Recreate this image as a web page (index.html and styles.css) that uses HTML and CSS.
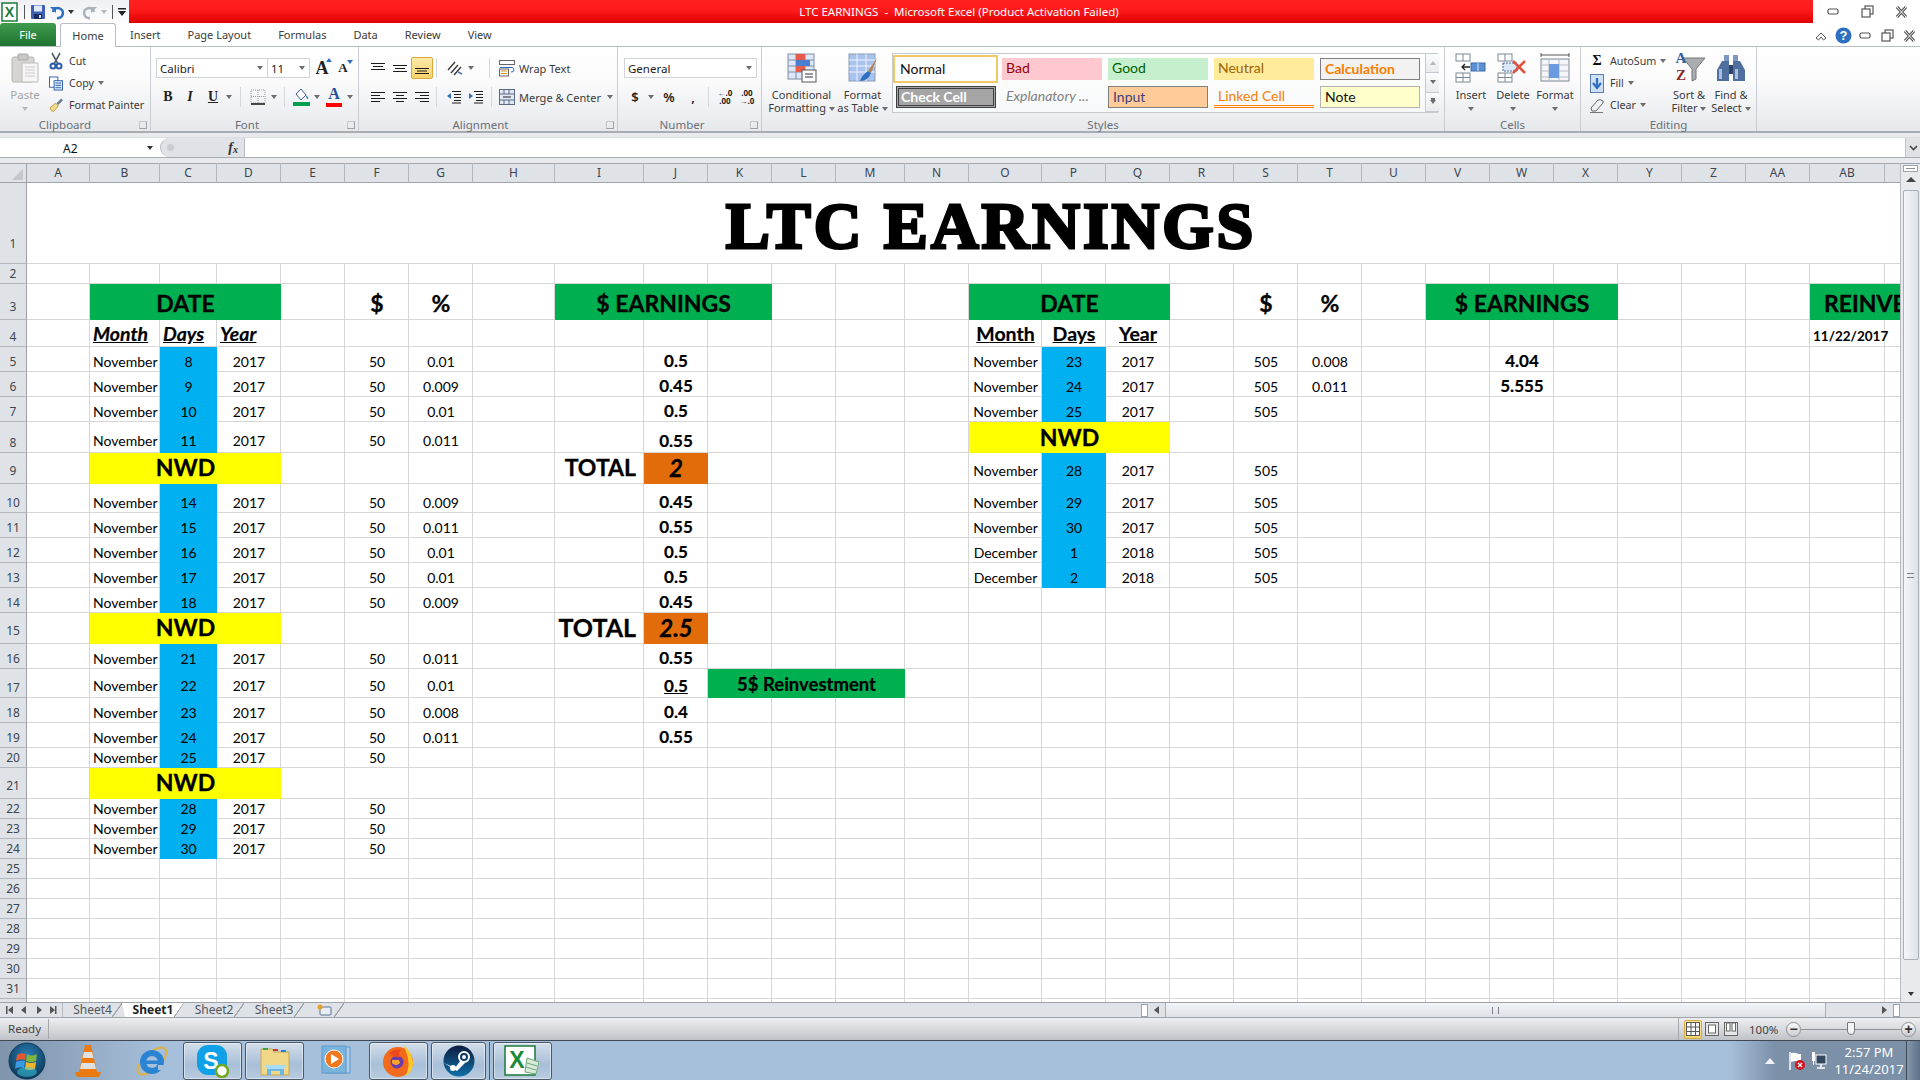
FILE: index.html
```html
<!DOCTYPE html>
<html lang="en">
<head>
<meta charset="utf-8">
<title>LTC EARNINGS - Microsoft Excel</title>
<link rel="stylesheet" href="styles.css">
</head>
<body>
<div class="app">

<header class="titlebar">
  <div class="qat">
    <svg class="qi" width="18" height="20" viewBox="0 0 18 20"><rect x="1" y="1" width="15" height="18" fill="#fff" stroke="#1c7a3a" stroke-width="1.5"/><text x="8.5" y="15" class="xl">X</text></svg>
    <span class="qsep"></span>
    <svg class="qi" width="16" height="16" viewBox="0 0 16 16"><rect x="1" y="1" width="14" height="14" rx="1" fill="#3f5fb5"/><rect x="4" y="1.500" width="8" height="6" fill="#dfe9f7"/><rect x="4" y="10" width="8" height="5" fill="#1d2c5e"/><rect x="9" y="11" width="2" height="3" fill="#cdd"/></svg>
    <svg class="qi" width="14" height="16" viewBox="0 0 14 16"><path d="M3 8 A5 5 0 1 1 7 14" fill="none" stroke="#2f6fc0" stroke-width="2.600"/><path d="M0 3 L6 3 L6 9 Z" fill="#2f6fc0"/></svg>
    <span class="tri dark"></span>
    <svg class="qi q2" width="14" height="16" viewBox="0 0 14 16"><path d="M11 8 A5 5 0 1 0 7 14" fill="none" stroke="#aab2ba" stroke-width="2.600"/><path d="M14 3 L8 3 L8 9 Z" fill="#aab2ba"/></svg>
    <span class="tri pale"></span>
    <span class="qsep"></span>
    <svg class="qi" width="8" height="10" viewBox="0 0 8 10"><rect x="0" y="1" width="8" height="1.500" fill="#222"/><path d="M0 4 H8 L4 9 Z" fill="#222"/></svg>
  </div>
  <div class="redbar">LTC EARNINGS &nbsp;-&nbsp; Microsoft Excel (Product Activation Failed)</div>
  <div class="winctl">
    <svg width="12" height="8" viewBox="0 0 12 8"><rect x="1" y="1" width="10" height="5" rx="1.500" fill="#fff" stroke="#555" stroke-width="1.200"/></svg>
    <svg width="13" height="13" viewBox="0 0 13 13"><rect x="4" y="1" width="8" height="8" fill="#fff" stroke="#555" stroke-width="1.200"/><rect x="1" y="4" width="8" height="8" fill="#fff" stroke="#555" stroke-width="1.200"/></svg>
    <svg width="13" height="12" viewBox="0 0 13 12"><path d="M2 1 L11 11 M11 1 L2 11" stroke="#555" stroke-width="3"/><path d="M2 1 L11 11 M11 1 L2 11" stroke="#fff" stroke-width="1"/></svg>
  </div>
</header>

<nav class="tabs">
  <div class="file">File</div>
  <div class="home">Home</div>
  <div class="tablist"><span>Insert</span><span>Page Layout</span><span>Formulas</span><span>Data</span><span>Review</span><span>View</span></div>
  <div class="docctl">
    <svg width="12" height="10" viewBox="0 0 12 10"><path d="M1 7 L6 2 L11 7 L8.500 9 L6 6 L3.500 9 Z" fill="#fff" stroke="#555"/></svg>
    <svg width="17" height="17" viewBox="0 0 17 17"><circle cx="8.500" cy="8.500" r="8" fill="#2f6fc0"/><text x="8.500" y="13" class="help">?</text></svg>
    <svg width="12" height="8" viewBox="0 0 12 8"><rect x="1" y="1" width="10" height="5" rx="1.500" fill="#fff" stroke="#555" stroke-width="1.200"/></svg>
    <svg width="13" height="13" viewBox="0 0 13 13"><rect x="4" y="1" width="8" height="8" fill="#fff" stroke="#555" stroke-width="1.200"/><rect x="1" y="4" width="8" height="8" fill="#fff" stroke="#555" stroke-width="1.200"/></svg>
    <svg width="13" height="12" viewBox="0 0 13 12"><path d="M2 1 L11 11 M11 1 L2 11" stroke="#555" stroke-width="3"/><path d="M2 1 L11 11 M11 1 L2 11" stroke="#fff" stroke-width="1"/></svg>
  </div>
</nav>

<section class="ribbon">

  <div class="group g-clip">
    <div class="gbody">
      <div class="paste">
        <svg width="28" height="30" viewBox="0 0 28 30"><rect x="1" y="4" width="22" height="25" rx="2" fill="#d7d5d2" stroke="#b5b3b0"/><rect x="7" y="1" width="10" height="6" rx="1" fill="#c9c7c4" stroke="#aaa"/><path d="M11 10 H27 V29 H11 Z" fill="#f6f6f6" stroke="#bbb"/><path d="M14 14 H24 M14 17 H24 M14 20 H24 M14 23 H24" stroke="#ccc"/></svg>
        <span class="plabel">Paste</span><span class="tri pale"></span>
      </div>
      <div class="smallcol">
        <div class="si"><svg width="14" height="18" viewBox="0 0 14 18"><path d="M3 1 L9 12 M11 1 L5 12" stroke="#57606c" stroke-width="1.600"/><circle cx="4" cy="14" r="2.500" fill="none" stroke="#2a5fa8" stroke-width="2"/><circle cx="10" cy="14" r="2.500" fill="none" stroke="#2a5fa8" stroke-width="2"/></svg>Cut</div>
        <div class="si"><svg width="15" height="15" viewBox="0 0 15 15"><rect x="0.500" y="0.500" width="9" height="11" fill="#fff" stroke="#2a5fa8"/><rect x="5.500" y="4.500" width="9" height="10" fill="#dce8f6" stroke="#2a5fa8"/><path d="M7 7 H13 M7 9.500 H13 M7 12 H13" stroke="#2a5fa8"/></svg>Copy <span class="tri"></span></div>
        <div class="si"><svg width="15" height="16" viewBox="0 0 15 16"><path d="M1 11 L7 6 L10 9 L5 15 Q2 15 1 11 Z" fill="#efd98a" stroke="#b08d30" stroke-width=".8"/><path d="M8 6 L13 1 L15 3 L10 8 Z" fill="#6c7a8e"/></svg>Format Painter</div>
      </div>
    </div>
    <div class="glabel lb-clip">Clipboard<i class="launch"></i></div>
  </div>

  <div class="group g-font">
    <div class="gbody stack">
      <div class="line">
        <div class="combo c-name">Calibri<span class="tri"></span></div>
        <div class="combo c-size">11<span class="tri"></span></div>
        <span class="growA big">A<i class="up"></i></span>
        <span class="growA small">A<i class="down"></i></span>
      </div>
      <div class="line lf">
        <span class="ic fb">B</span><span class="ic fi">I</span><span class="ic fu">U</span><span class="dd"><span class="tri"></span></span>
        <span class="vsep wider"></span>
        <span class="ic"><svg width="16" height="16" viewBox="0 0 16 16"><path d="M1 1 H15 V14 H1 Z M8 1 V14 M1 7.500 H15" fill="none" stroke="#999" stroke-dasharray="1 1"/><path d="M1 15 H15" stroke="#111" stroke-width="1.500"/></svg></span><span class="dd"><span class="tri"></span></span>
        <span class="vsep"></span>
        <span class="ic"><svg width="17" height="18" viewBox="0 0 17 18"><path d="M3 6 L8 1 L13 7 L8 12 Z" fill="#fff" stroke="#3a5f94"/><path d="M13 7 Q16 10 15 11 Q13 11 13 7 Z" fill="#2f6fc0"/><rect x="0" y="14" width="17" height="4" fill="#00a050"/></svg></span><span class="dd"><span class="tri"></span></span>
        <span class="ic fcolor">A<i></i></span><span class="dd"><span class="tri"></span></span>
      </div>
    </div>
    <div class="glabel lb-mid">Font<i class="launch"></i></div>
  </div>

  <div class="group g-align">
    <div class="gbody stack">
      <div class="line">
        <span class="ic"><svg class="al" viewBox="0 0 14 14"><path d="M0 2.500 H14 M2 5.500 H12 M0 8.500 H14" /></svg></span>
        <span class="ic"><svg class="al" viewBox="0 0 14 14"><path d="M0 4.500 H14 M2 7.500 H12 M0 10.500 H14" /></svg></span>
        <span class="ic on"><svg class="al" viewBox="0 0 14 14"><path d="M0 7.500 H14 M2 10 H12 M0 12.500 H14" /></svg></span>
        <span class="vsep s1"></span>
        <span class="ic"><svg width="18" height="16" viewBox="0 0 18 16"><path d="M2 10 L9 2 M5 13 L12 5 M8 15 L15 7" stroke="#333" stroke-width="1.300"/><path d="M12 12 L16 14" stroke="#4a77b5" stroke-width="1.500"/></svg></span><span class="dd"><span class="tri"></span></span>
        <span class="vsep s2"></span>
        <span class="wide"><svg width="16" height="17" viewBox="0 0 16 17"><rect x=".5" y=".5" width="15" height="4" fill="#fff" stroke="#666"/><path d="M1 7.500 H13 Q15 7.500 15 10 Q15 12 12 12" fill="none" stroke="#2f6fc0"/><rect x=".5" y="9" width="9" height="7" fill="#fff" stroke="#666"/><path d="M2 11 H8 M2 13.500 H8" stroke="#d98b20"/></svg>Wrap Text</span>
      </div>
      <div class="line">
        <span class="ic"><svg class="al" viewBox="0 0 14 14"><path d="M0 2.500 H14 M0 5.500 H9 M0 8.500 H14 M0 11.500 H9"/></svg></span>
        <span class="ic"><svg class="al" viewBox="0 0 14 14"><path d="M0 2.500 H14 M3 5.500 H11 M0 8.500 H14 M3 11.500 H11"/></svg></span>
        <span class="ic"><svg class="al" viewBox="0 0 14 14"><path d="M0 2.500 H14 M5 5.500 H14 M0 8.500 H14 M5 11.500 H14"/></svg></span>
        <span class="vsep s1b"></span>
        <span class="ic"><svg class="al" viewBox="0 0 14 14"><path d="M5 1.500 H14 M7 4.500 H14 M7 7.500 H14 M7 10.500 H14 M5 13 H14"/><path d="M0 6 L4 3 V9 Z" fill="#2f6fc0" stroke="none"/></svg></span>
        <span class="ic"><svg class="al" viewBox="0 0 14 14"><path d="M5 1.500 H14 M7 4.500 H14 M7 7.500 H14 M7 10.500 H14 M5 13 H14"/><path d="M4 6 L0 3 V9 Z" fill="#2f6fc0" stroke="none"/></svg></span>
        <span class="vsep s2b"></span>
        <span class="wide"><svg width="16" height="16" viewBox="0 0 16 16"><rect x=".5" y=".5" width="15" height="15" fill="#dfe8f4" stroke="#5a6a80"/><path d="M.5 5 H15.500 M.5 11 H15.500 M5 .5 V5 M10 .5 V5 M5 11 V15.500 M10 11 V15.500" stroke="#5a6a80"/><path d="M4 8 H12" stroke="#222"/></svg>Merge &amp; Center <span class="tri"></span></span>
      </div>
    </div>
    <div class="glabel lb-mid">Alignment<i class="launch"></i></div>
  </div>

  <div class="group g-num">
    <div class="gbody stack">
      <div class="line"><div class="combo c-gen">General<span class="tri"></span></div></div>
      <div class="line">
        <span class="ic sym">$</span><span class="dd"><span class="tri"></span></span>
        <span class="ic sym n1">%</span>
        <span class="ic sym n2">,</span>
        <span class="vsep s3"></span>
        <span class="ic dec">←.0<br>.00</span>
        <span class="ic dec">.00<br>→.0</span>
      </div>
    </div>
    <div class="glabel lb-mid">Number<i class="launch"></i></div>
  </div>

  <div class="group g-styles">
    <div class="gbody">
      <div class="bigbtn w63">
        <svg width="30" height="30" viewBox="0 0 30 30"><rect x="1" y="1" width="26" height="25" fill="#dce7f7" stroke="#7f8ea3"/><path d="M1 7 H27 M1 13 H27 M1 19 H27 M9 1 V26 M18 1 V26" stroke="#7f8ea3"/><rect x="9" y="1" width="9" height="6" fill="#e85a4a"/><rect x="9" y="7" width="14" height="6" fill="#4a7fd0"/><rect x="9" y="13" width="9" height="6" fill="#e85a4a"/><rect x="15" y="17" width="14" height="12" fill="#fff" stroke="#555"/><path d="M18 21 H26 M18 24 H26" stroke="#333"/></svg>
        <span class="blabel">Conditional<br>Formatting <span class="tri"></span></span>
      </div>
      <div class="bigbtn w59">
        <svg width="30" height="30" viewBox="0 0 30 30"><rect x="1" y="1" width="26" height="27" fill="#a9c3ee" stroke="#8a9bb5"/><path d="M1 7 H27 M1 13 H27 M1 19 H27 M9 1 V28 M18 1 V28" stroke="#eef3fb"/><path d="M29 5 L20 18 L23 20 Z" fill="#b9854a"/><path d="M20 18 Q14 22 12 28 Q20 28 23 20 Z" fill="#2f6fc0"/></svg>
        <span class="blabel">Format<br>as Table <span class="tri"></span></span>
      </div>
      <div class="gallery">
        <div class="stylegrid">
          <div class="st st-normal">Normal</div><div class="st st-bad">Bad</div><div class="st st-good">Good</div><div class="st st-neutral">Neutral</div><div class="st st-calc">Calculation</div>
          <div class="st st-check">Check Cell</div><div class="st st-expl">Explanatory ...</div><div class="st st-input">Input</div><div class="st st-linked">Linked Cell</div><div class="st st-note">Note</div>
        </div>
        <div class="galscroll"><span><i class="tri up pale"></i></span><span><i class="tri"></i></span><span><i class="tri bar"></i></span></div>
      </div>
    </div>
    <div class="glabel">Styles</div>
  </div>

  <div class="group g-cells">
    <div class="gbody">
      <div class="bigbtn w42">
        <svg width="32" height="30" viewBox="0 0 32 30"><g fill="#fff" stroke="#7b8794"><rect x="1" y="1" width="14" height="7"/><path d="M8 1 V8"/><rect x="1" y="20" width="14" height="9"/><path d="M8 20 V29 M1 24.500 H15"/></g><rect x="16" y="10" width="14" height="8" fill="#5b8fd6" stroke="#3c6aa8"/><path d="M23 10 V18" stroke="#dce8f6"/><path d="M15 14 H7 M10 11 L7 14 L10 17" fill="none" stroke="#222" stroke-width="1.300"/></svg>
        <span class="blabel">Insert<br><span class="tri"></span></span>
      </div>
      <div class="bigbtn w42">
        <svg width="32" height="30" viewBox="0 0 32 30"><g fill="#fff" stroke="#7b8794"><rect x="1" y="1" width="14" height="7"/><path d="M8 1 V8"/><rect x="1" y="20" width="14" height="9"/><path d="M8 20 V29 M1 24.500 H15"/></g><rect x="6" y="10" width="14" height="8" fill="#dce8f6" stroke="#3c6aa8" stroke-dasharray="2 1"/><path d="M16 8 L28 20 M28 8 L16 20" stroke="#e2533f" stroke-width="2.500"/></svg>
        <span class="blabel">Delete<br><span class="tri"></span></span>
      </div>
      <div class="bigbtn w42">
        <svg width="32" height="30" viewBox="0 0 32 30"><path d="M2 2 H30 M2 0 V4 M30 0 V4" stroke="#555"/><rect x="2" y="6" width="28" height="22" fill="#f4f6f9" stroke="#7b8794"/><path d="M2 12 H30 M2 18 H30 M2 24 H30 M10 6 V28 M20 6 V28" stroke="#b7bec8"/><rect x="10" y="11" width="10" height="14" fill="#6a9ae0"/></svg>
        <span class="blabel">Format<br><span class="tri"></span></span>
      </div>
    </div>
    <div class="glabel">Cells</div>
  </div>

  <div class="group g-edit">
    <div class="gbody">
      <div class="smallcol editcol">
        <div class="si"><span class="sigma">Σ</span>AutoSum <span class="tri"></span></div>
        <div class="si"><svg width="14" height="19" viewBox="0 0 14 19"><rect x=".5" y=".5" width="13" height="18" fill="#cfe0f5" stroke="#5a7fb5"/><path d="M7 4 V12 M3 9 L7 14 L11 9" fill="none" stroke="#2f6fc0" stroke-width="2.200"/></svg>Fill <span class="tri"></span></div>
        <div class="si"><svg width="14" height="15" viewBox="0 0 14 15"><path d="M1 10 L8 2 Q10 1 13 3 L13 5 L6 13 L2 13 Z" fill="#eef2f7" stroke="#666"/><path d="M0 14.500 H13" stroke="#777"/></svg>Clear <span class="tri"></span></div>
      </div>
      <div class="bigbtn w42">
        <svg class="sorticon" width="34" height="34" viewBox="0 0 34 34"><path d="M11 9 H33 L24 20 V30 L20 32 V20 Z" fill="#a9adb2" stroke="#777"/><text x="9" y="14" class="az azA">A</text><text x="9" y="30.500" class="az azZ">Z</text></svg>
        <span class="blabel">Sort &amp;<br>Filter <span class="tri"></span></span>
      </div>
      <div class="bigbtn w42">
        <svg width="30" height="30" viewBox="0 0 30 30"><rect x="8" y="2" width="5" height="7" fill="#7c97c2"/><rect x="17" y="2" width="5" height="7" fill="#7c97c2"/><path d="M6 8 H13 V28 H1 V17 Z" fill="#4f6f9f"/><path d="M17 8 H24 L29 17 V28 H17 Z" fill="#4f6f9f"/><rect x="13" y="12" width="4" height="9" fill="#2e4468"/><rect x="3" y="16" width="3" height="10" fill="#a9c0e0"/><rect x="19" y="16" width="3" height="10" fill="#a9c0e0"/></svg>
        <span class="blabel">Find &amp;<br>Select <span class="tri"></span></span>
      </div>
    </div>
    <div class="glabel">Editing</div>
  </div>
</section>

<div class="fbarwrap">
  <div class="fbar">
    <div class="namebox"><span>A2</span><span class="tri dark"></span></div>
    <div class="fxbox"><i class="knob"></i><span class="fx">f<sub>x</sub></span></div>
    <div class="finput"></div>
    <div class="fexpand"><svg width="9" height="6" viewBox="0 0 9 6"><path d="M1 1 L4.500 4.500 L8 1" fill="none" stroke="#444" stroke-width="1.600"/></svg></div>
  </div>
</div>

<main class="sheet">
  <div class="gridarea">
    <div class="gridcols colhead">
      <div class="corner"><i></i></div>
      <span>A</span><span>B</span><span>C</span><span>D</span><span>E</span><span>F</span><span>G</span><span>H</span><span>I</span><span>J</span><span>K</span><span>L</span><span>M</span><span>N</span><span>O</span><span>P</span><span>Q</span><span>R</span><span>S</span><span>T</span><span>U</span><span>V</span><span>W</span><span>X</span><span>Y</span><span>Z</span><span>AA</span><span>AB</span><span></span>
    </div>
    <div class="rows">
      <div class="gridcols lines" aria-hidden="true">
        <i></i><i></i><i></i><i></i><i></i><i></i><i></i><i></i><i></i><i></i><i></i><i></i><i></i><i></i><i></i><i></i><i></i><i></i><i></i><i></i><i></i><i></i><i></i><i></i><i></i><i></i><i></i><i></i><i></i><i></i>
      </div>

      <div class="gridcols row h81"><b class="rh rhx">1</b><div class="titlecell">LTC EARNINGS</div></div>
      <div class="gridcols row h20"><b class="rh">2</b></div>
      <div class="gridcols row h36"><b class="rh rhm">3</b>
        <div class="c head green span-BD">DATE</div><div class="c head F">$</div><div class="c head G">%</div><div class="c head green span-IK">$ EARNINGS</div>
        <div class="c head green span-OQ">DATE</div><div class="c head S">$</div><div class="c head T">%</div><div class="c head green span-VX">$ EARNINGS</div>
        <div class="c head green span-AB reinv">REINVESTMENT</div>
      </div>
      <div class="gridcols row h27"><b class="rh">4</b>
        <div class="c sub ital B left">Month</div><div class="c sub ital C left">Days</div><div class="c sub ital D left">Year</div>
        <div class="c sub O">Month</div><div class="c sub P">Days</div><div class="c sub Q">Year</div>
        <div class="c bdate AB">11/22/2017</div>
      </div>
      <div class="gridcols row h25"><b class="rh">5</b><div class="c B left">November</div><div class="c C blue">8</div><div class="c D">2017</div><div class="c F">50</div><div class="c G">0.01</div><div class="c val J">0.5</div>
        <div class="c O">November</div><div class="c P blue">23</div><div class="c Q">2017</div><div class="c S">505</div><div class="c T">0.008</div><div class="c val W">4.04</div></div>
      <div class="gridcols row h25"><b class="rh">6</b><div class="c B left">November</div><div class="c C blue">9</div><div class="c D">2017</div><div class="c F">50</div><div class="c G">0.009</div><div class="c val J">0.45</div>
        <div class="c O">November</div><div class="c P blue">24</div><div class="c Q">2017</div><div class="c S">505</div><div class="c T">0.011</div><div class="c val W">5.555</div></div>
      <div class="gridcols row h25"><b class="rh">7</b><div class="c B left">November</div><div class="c C blue">10</div><div class="c D">2017</div><div class="c F">50</div><div class="c G">0.01</div><div class="c val J">0.5</div>
        <div class="c O">November</div><div class="c P blue">25</div><div class="c Q">2017</div><div class="c S">505</div></div>
      <div class="gridcols row h31 lift"><b class="rh">8</b><div class="c B left">November</div><div class="c C blue">11</div><div class="c D">2017</div><div class="c F">50</div><div class="c G">0.011</div><div class="c val J">0.55</div>
        <div class="c nwd span-OQ">NWD</div></div>
      <div class="gridcols row h31"><b class="rh rhm">9</b><div class="c nwd span-BD">NWD</div><div class="c total I">TOTAL</div><div class="c sum J">2</div>
        <div class="c mid O">November</div><div class="c mid P blue">28</div><div class="c mid Q">2017</div><div class="c mid S">505</div></div>
      <div class="gridcols row h29"><b class="rh">10</b><div class="c B left">November</div><div class="c C blue">14</div><div class="c D">2017</div><div class="c F">50</div><div class="c G">0.009</div><div class="c val J">0.45</div>
        <div class="c O">November</div><div class="c P blue">29</div><div class="c Q">2017</div><div class="c S">505</div></div>
      <div class="gridcols row h25"><b class="rh">11</b><div class="c B left">November</div><div class="c C blue">15</div><div class="c D">2017</div><div class="c F">50</div><div class="c G">0.011</div><div class="c val J">0.55</div>
        <div class="c O">November</div><div class="c P blue">30</div><div class="c Q">2017</div><div class="c S">505</div></div>
      <div class="gridcols row h25"><b class="rh">12</b><div class="c B left">November</div><div class="c C blue">16</div><div class="c D">2017</div><div class="c F">50</div><div class="c G">0.01</div><div class="c val J">0.5</div>
        <div class="c O">December</div><div class="c P blue">1</div><div class="c Q">2018</div><div class="c S">505</div></div>
      <div class="gridcols row h25"><b class="rh">13</b><div class="c B left">November</div><div class="c C blue">17</div><div class="c D">2017</div><div class="c F">50</div><div class="c G">0.01</div><div class="c val J">0.5</div>
        <div class="c O">December</div><div class="c P blue">2</div><div class="c Q">2018</div><div class="c S">505</div></div>
      <div class="gridcols row h25"><b class="rh">14</b><div class="c B left">November</div><div class="c C blue">18</div><div class="c D">2017</div><div class="c F">50</div><div class="c G">0.009</div><div class="c val J">0.45</div></div>
      <div class="gridcols row h31"><b class="rh rhm">15</b><div class="c nwd span-BD">NWD</div><div class="c total big I">TOTAL</div><div class="c sum J">2.5</div></div>
      <div class="gridcols row h25"><b class="rh">16</b><div class="c B left">November</div><div class="c C blue">21</div><div class="c D">2017</div><div class="c F">50</div><div class="c G">0.011</div><div class="c val J">0.55</div></div>
      <div class="gridcols row h29 lift"><b class="rh">17</b><div class="c B left">November</div><div class="c C blue">22</div><div class="c D">2017</div><div class="c F">50</div><div class="c G">0.01</div><div class="c val J"><u>0.5</u></div><div class="c reinvest span-KM">5$ Reinvestment</div></div>
      <div class="gridcols row h25"><b class="rh">18</b><div class="c B left">November</div><div class="c C blue">23</div><div class="c D">2017</div><div class="c F">50</div><div class="c G">0.008</div><div class="c val J">0.4</div></div>
      <div class="gridcols row h25"><b class="rh">19</b><div class="c B left">November</div><div class="c C blue">24</div><div class="c D">2017</div><div class="c F">50</div><div class="c G">0.011</div><div class="c val J">0.55</div></div>
      <div class="gridcols row h20"><b class="rh">20</b><div class="c B left">November</div><div class="c C blue">25</div><div class="c D">2017</div><div class="c F">50</div></div>
      <div class="gridcols row h31"><b class="rh rhm">21</b><div class="c nwd span-BD">NWD</div></div>
      <div class="gridcols row h20"><b class="rh">22</b><div class="c B left">November</div><div class="c C blue">28</div><div class="c D">2017</div><div class="c F">50</div></div>
      <div class="gridcols row h20"><b class="rh">23</b><div class="c B left">November</div><div class="c C blue">29</div><div class="c D">2017</div><div class="c F">50</div></div>
      <div class="gridcols row h20"><b class="rh">24</b><div class="c B left">November</div><div class="c C blue">30</div><div class="c D">2017</div><div class="c F">50</div></div>
      <div class="gridcols row h20"><b class="rh">25</b></div>
      <div class="gridcols row h20"><b class="rh">26</b></div>
      <div class="gridcols row h20"><b class="rh">27</b></div>
      <div class="gridcols row h20"><b class="rh">28</b></div>
      <div class="gridcols row h20"><b class="rh">29</b></div>
      <div class="gridcols row h20"><b class="rh">30</b></div>
      <div class="gridcols row h20"><b class="rh">31</b></div>
      <div class="gridcols row h20"><b class="rh"></b></div>
    </div>
  </div>
  <aside class="vscroll">
    <span class="split"><i></i></span>
    <span class="arrow"><i class="tri up dark"></i></span>
    <span class="thumb"><i></i></span>
    <span class="arrow"><i class="tri dark"></i></span>
  </aside>
</main>

<div class="tabbar">
  <div class="nav">
    <svg width="52" height="10" viewBox="0 0 52 10"><g fill="#555"><rect x="1" y="1" width="1.500" height="8"/><path d="M8 1 V9 L3 5 Z M21 1 V9 L16 5 Z M32 1 V9 L37 5 Z M45 1 V9 L50 5 Z"/><rect x="50" y="1" width="1.500" height="8"/></g></svg>
  </div>
  <div class="sheets">
    <span class="stab first">Sheet4</span><span class="stab active">Sheet1</span><span class="stab">Sheet2</span><span class="stab">Sheet3</span>
    <span class="stab newtab"><svg width="15" height="13" viewBox="0 0 15 13"><rect x="3" y="3" width="11" height="8" rx="1" fill="#e8eef6" stroke="#5a7090"/><circle cx="3" cy="3" r="2.500" fill="#e8a020"/></svg></span>
  </div>
  <div class="hscroll">
    <span class="hsplit"></span>
    <span class="harrow"><i class="tl"></i></span>
    <span class="hthumb"><i></i></span>
    <span class="htrack"></span>
    <span class="harrow"><i class="tr"></i></span>
    <span class="hsplit"></span>
  </div>
</div>

<footer class="status">
  <span class="ready">Ready</span>
  <div class="stright">
    <span class="view on"><svg width="14" height="14" viewBox="0 0 14 14"><rect x=".5" y=".5" width="13" height="13" fill="#fff" stroke="#555"/><path d="M.5 5 H13.500 M.5 9.500 H13.500 M5 .5 V13.500 M9.500 .5 V13.500" stroke="#555"/></svg></span>
    <span class="view"><svg width="14" height="14" viewBox="0 0 14 14"><rect x=".5" y=".5" width="13" height="13" fill="#e4e6e9" stroke="#666"/><rect x="3.500" y="3" width="7" height="8" fill="#fff" stroke="#666"/></svg></span>
    <span class="view"><svg width="14" height="14" viewBox="0 0 14 14"><rect x=".5" y=".5" width="13" height="13" fill="#e4e6e9" stroke="#666"/><rect x="2.500" y="1" width="3.500" height="8" fill="#fff" stroke="#666"/><rect x="8" y="1" width="3.500" height="8" fill="#fff" stroke="#666"/></svg></span>
    <span class="zoomlabel">100%</span>
    <span class="zbtn">−</span>
    <span class="slider"><i></i></span>
    <span class="zbtn">+</span>
  </div>
</footer>

<div class="taskbar">
  <div class="tb-left">
    <span class="tk t-orb"><svg width="38" height="38" viewBox="0 0 38 38"><defs><radialGradient id="orb" cx=".5" cy=".35" r=".7"><stop offset="0" stop-color="#2b7fb8"/><stop offset="1" stop-color="#0a3350"/></radialGradient></defs><circle cx="19" cy="19" r="18" fill="url(#orb)" stroke="#0d3d5c"/><path d="M9 13 Q13 10 18 12 L17 18 Q12 16 8 19 Z" fill="#e8582f"/><path d="M19 12 Q24 15 29 12 L28 19 Q23 21 18 19 Z" fill="#7db83a"/><path d="M8 20 Q12 18 17 19 L16 26 Q11 24 7 27 Z" fill="#3b9be0"/><path d="M18 20 Q23 22 28 20 L27 27 Q21 29 17 27 Z" fill="#f2b62c"/><ellipse cx="19" cy="30" rx="10" ry="5" fill="#3ccde0" opacity=".5"/></svg></span>
    <span class="tk t-vlc"><svg width="28" height="36" viewBox="0 0 28 36"><path d="M11 2 H17 L23 29 H5 Z" fill="#f07a10"/><path d="M10 9 H18 L19.500 15 H8.500 Z M7.500 20 H20.500 L22 26 H6 Z" fill="#e0e0e0"/><path d="M1 29 H27 L25 34 H3 Z" fill="#e87a10"/></svg></span>
    <span class="tk t-ie"><svg width="36" height="36" viewBox="0 0 36 36"><ellipse cx="18" cy="18" rx="18" ry="8" transform="rotate(-42 18 18)" fill="none" stroke="#e0b040" stroke-width="2"/><circle cx="18" cy="19" r="12" fill="#2a84d2"/><circle cx="18" cy="19" r="6" fill="#a6bfda"/><rect x="11" y="17.500" width="17" height="3.500" fill="#2a84d2"/><path d="M24 22 L30 22 L31 27 L24 27 Z" fill="#a6bfda"/></svg></span>
    <span class="box b-58"><svg width="34" height="34" viewBox="0 0 34 34"><rect x="1" y="1" width="30" height="30" rx="11" fill="#10a0e8"/><text x="15" y="25" class="skype">S</text><circle cx="26" cy="27" r="6" fill="#fff" stroke="#6fa820" stroke-width="2.500"/></svg></span>
    <span class="box b-58 ml4"><svg width="30" height="32" viewBox="0 0 30 32"><path d="M1 4 H12 L14 7 H29 V30 H1 Z" fill="#f0d888" stroke="#c8a850"/><rect x="3" y="3" width="5" height="2" fill="#3aa050"/><rect x="13" y="4" width="5" height="2" fill="#c83a2a"/><rect x="21" y="5" width="5" height="2" fill="#2a80d0"/><path d="M7 22 H24 V30 H20 V26 H11 V30 H7 Z" fill="#6ab8e8"/><path d="M5 20 H26 L24 24 H7 Z" fill="#a8dcf8"/></svg></span>
    <span class="tk t-wmp"><svg width="30" height="32" viewBox="0 0 30 32"><rect x="5" y="2" width="24" height="26" fill="#a9cdea" stroke="#5a9acb"/><rect x="1" y="1" width="24" height="27" fill="#7ab4dc" stroke="#5a9acb"/><circle cx="13" cy="14" r="9" fill="#f0781e" stroke="#fff" stroke-width="1"/><path d="M10 9 L18 14 L10 19 Z" fill="#fff"/></svg></span>
    <span class="box b-59 ml"><svg width="32" height="34" viewBox="0 0 32 34"><circle cx="15" cy="18" r="15" fill="#f26a1c"/><path d="M20 1 Q29 8 30 18 Q30 28 22 32 Q30 20 20 1 Z" fill="#fcc82c"/><circle cx="14" cy="18" r="6.500" fill="#6a3cb0"/><path d="M6 9 Q12 4 18 6 Q14 10 18 13 Q10 14 6 9 Z" fill="#f0481c"/><path d="M9 16 H16 L17 19 Q13 23 9 19 Z" fill="#f9a826"/></svg></span>
    <span class="box b-55"><svg width="32" height="32" viewBox="0 0 32 32"><defs><linearGradient id="st" x1="0" y1="0" x2="0" y2="1"><stop offset="0" stop-color="#0e1c3e"/><stop offset="1" stop-color="#0f70a8"/></linearGradient></defs><circle cx="16" cy="16" r="15.500" fill="url(#st)"/><circle cx="21" cy="12" r="5" fill="none" stroke="#fff" stroke-width="2"/><circle cx="21" cy="12" r="2" fill="#fff"/><path d="M1 18 L12 23 L18 15 L22 18 L14 26 Z" fill="#fff"/><circle cx="10" cy="23" r="3" fill="#fff"/></svg></span>
    <span class="gapline"></span>
    <span class="box b-59"><svg class="xlicon" width="36" height="32" viewBox="0 0 36 32"><rect x="2" y="1" width="30" height="29" fill="#fff" stroke="#1a7a3a" stroke-width="1.500"/><text x="14" y="23" class="xlbig">X</text><path d="M24 13 L36 17 L33 29 L22 27 Z" fill="#dce8d8" stroke="#6aa878"/><path d="M24 18 L34 21 M23 22 L33 25" stroke="#6aa878"/></svg></span>
  </div>
  <div class="tray">
    <svg class="tr-up" width="10" height="6" viewBox="0 0 10 6"><path d="M0 6 L5 0 L10 6 Z" fill="#f0f4f8"/></svg>
    <svg class="flag" width="18" height="20" viewBox="0 0 18 20"><path d="M2 1 V19" stroke="#fff" stroke-width="1.500"/><path d="M3 2 Q8 1 10 3 L13 3 V11 Q8 9 3 11 Z" fill="#fff"/><circle cx="12" cy="14" r="5" fill="#d01820"/><path d="M10 12 L14 16 M14 12 L10 16" stroke="#fff" stroke-width="1.300"/></svg>
    <svg width="16" height="19" viewBox="0 0 16 19"><rect x="5" y="4" width="10" height="9" fill="#33475e" stroke="#fff"/><path d="M10 13 V16 M6 17 H14" stroke="#fff" stroke-width="1.500"/><rect x="1" y="1" width="3" height="9" fill="#fff"/><path d="M2.500 10 V14" stroke="#fff"/></svg>
    <div class="clock"><span>2:57 PM</span><span>11/24/2017</span></div>
    <span class="showdesk"></span>
  </div>
</div>

</div>
</body>
</html>
```

FILE: styles.css
```css
* { box-sizing: border-box; }
html, body { margin: 0; height: 100%; overflow: hidden; background: #fff; }
body { font-family: "Noto Sans", "Open Sans", sans-serif; font-size: 11px; color: #3b3b3b; }
.app { width: 1920px; height: 1080px; display: flex; flex-direction: column; overflow: hidden; }
i { font-style: normal; }

.tri { display: inline-block; width: 0; height: 0; border-left: 3.5px solid transparent; border-right: 3.5px solid transparent; border-top: 4px solid #6d6d6d; vertical-align: middle; }
.tri.pale { border-top-color: #b5b8bc; }
.tri.dark { border-top-color: #333; }
.tri.up { border-top: 0; border-bottom: 4px solid #6d6d6d; }
.tri.up.pale { border-bottom-color: #b5b8bc; }
.tri.up.dark { border-bottom-color: #444; border-left-width: 5px; border-right-width: 5px; border-bottom-width: 5px; }
.tri.bar { box-shadow: 0 -3px 0 -1px #6d6d6d; }

/* title bar */
.titlebar { height: 23px; display: flex; background: #fff; }
.qat { width: 129px; display: flex; align-items: center; gap: 4px; padding-left: 1px; background: linear-gradient(#eef0f3, #fdfdfe); }
.qi { flex: none; }
.q2 { margin-left: 5px; }
.qsep { width: 1px; height: 14px; background: #555; margin: 0 1px; }
.xl { font: bold 14px "Liberation Sans", sans-serif; fill: #1c7a3a; text-anchor: middle; }
.redbar { width: 1684px; background: linear-gradient(#ff2020, #ff1c1c 40%, #df0000); color: #fff; font-size: 11.500px; text-align: center; line-height: 23px; padding-right: 24px; white-space: nowrap; }
.winctl { flex: 1; display: flex; align-items: center; justify-content: space-between; padding: 0 12px 0 14px; }

/* tabs */
.tabs { height: 24px; display: flex; align-items: flex-end; background: #fff; border-bottom: 1px solid #b8bdc4; position: relative; }
.file { width: 56px; height: 23px; background: linear-gradient(#3f9a4e, #1f7430); color: #fff; text-align: center; line-height: 24px; border-radius: 3px 3px 0 0; }
.home { width: 56px; height: 24px; margin-left: 4px; margin-bottom: -1px; background: #fff; border: 1px solid #b8bdc4; border-bottom: 0; border-radius: 3px 3px 0 0; text-align: center; line-height: 24px; }
.tablist { display: flex; gap: 27px; margin-left: 14px; height: 23px; line-height: 24px; white-space: nowrap; }
.docctl { margin-left: auto; height: 23px; display: grid; grid-template-columns: repeat(5, 22px); justify-items: center; align-items: center; padding-top: 2px; }

/* ribbon */
.ribbon { height: 86px; display: flex; background: linear-gradient(#fff, #fbfbfc 40%, #e6e8ec); border-bottom: 2px solid #a8adb4; }
.group { display: flex; flex-direction: column; border-right: 1px solid #c9cdd3; flex: none; }
.gbody { height: 71px; display: flex; }
.gbody.stack { flex-direction: column; padding-top: 11px; gap: 9px; }
.glabel { height: 13px; text-align: center; line-height: 13px; color: #6b7076; font-size: 11.500px; position: relative; }
.lb-clip { padding-right: 20px; }
.lb-mid { padding-right: 15px; }
.launch { position: absolute; right: 3px; top: 3px; width: 8px; height: 8px; border: 1px solid #9aa0a7; border-top-color: #c2c6cb; border-left-color: #c2c6cb; }
.g-clip { width: 151px; }
.g-font { width: 208px; }
.g-font .gbody { padding-left: 5px; }
.lf { padding-left: 1px; }
.g-align { width: 259px; }
.g-align .gbody { padding-left: 8px; }
.g-num { width: 144px; }
.g-num .gbody { padding-left: 6px; }
.g-styles { width: 683px; }
.g-styles .gbody { padding-left: 8px; padding-top: 6px; }
.g-cells { width: 136px; }
.g-cells .gbody { padding-left: 5px; padding-top: 6px; }
.g-edit { width: 176px; }
.g-edit .gbody { padding-left: 9px; padding-top: 6px; }
.line { display: flex; align-items: center; height: 20px; white-space: nowrap; }

.paste { width: 30px; margin-left: 10px; padding-top: 6px; display: flex; flex-direction: column; align-items: center; color: #a2a4a7; line-height: 13px; }
.plabel { margin-top: 5px; margin-bottom: 6px; font-size: 11.500px; }
.smallcol { display: flex; flex-direction: column; margin-left: 9px; padding-top: 3px; }
.si { height: 22px; display: flex; align-items: center; gap: 6px; white-space: nowrap; font-size: 10.700px; }
.si svg { flex: none; width: 14px; }
.si .tri { margin-left: -2px; }
.editcol { margin-left: 0; width: 78px; padding-top: 0; margin-top: -3px; }
.sigma { width: 14px; font: bold 14px "Liberation Serif", serif; color: #111; text-align: center; }

.combo { height: 20px; background: #fff; border: 1px solid #d0d3d8; display: flex; align-items: center; justify-content: space-between; padding: 0 4px 0 3px; color: #222; font-size: 11.500px; }
.c-name { width: 112px; }
.c-size { width: 43px; margin-left: -1px; }
.c-gen { width: 133px; }
.growA { font-family: "Liberation Serif", serif; font-weight: bold; color: #222; position: relative; display: inline-block; text-align: center; width: 20px; }
.growA.big { font-size: 18px; margin-left: 2px; }
.growA.small { font-size: 13px; margin-left: 1px; }
.growA i { position: absolute; right: 0; top: 0; width: 0; height: 0; border-left: 3px solid transparent; border-right: 3px solid transparent; }
.growA .up { border-bottom: 4px solid #2f6fc0; }
.growA .down { border-top: 4px solid #2f6fc0; }

.ic { width: 22px; height: 20px; display: flex; align-items: center; justify-content: center; flex: none; color: #222; }
.dd { width: 10px; display: flex; justify-content: center; flex: none; }
.vsep { width: 1px; height: 20px; background: #d5d8dc; margin: 0 5px; flex: none; }
.vsep.wider { margin: 0 6px; }
.fb, .fi, .fu, .fcolor { font-family: "Liberation Serif", serif; font-size: 14px; font-weight: bold; }
.fi { font-style: italic; }
.fu { text-decoration: underline; margin-left: 1px; }
.fcolor { margin-left: 1px; position: relative; color: #1f4f9a; font-size: 16px; line-height: 14px; align-items: flex-start; }
.fcolor i { position: absolute; left: 3px; right: 3px; bottom: 0; height: 4px; background: #f00; }
.al { width: 14px; height: 14px; fill: none; stroke: #1c1c1c; stroke-width: 1; }
.on { background: linear-gradient(#fde9a8, #fbd36c); border: 1px solid #d8a93c; border-radius: 2px; height: 22px; }
.s1 { margin-right: 7px; margin-left: 3px; }
.s2 { margin-left: 13px; margin-right: 9px; }
.s1b { margin-left: 3px; margin-right: 6px; }
.s2b { margin-left: 4px; margin-right: 7px; }
.wide { display: flex; align-items: center; gap: 4px; white-space: nowrap; }
.wide svg { flex: none; }
.wide .tri { margin-left: 2px; }
.sym { font-size: 13px; font-weight: 600; }
.n1 { margin-left: 2px; }
.n2 { margin-left: 2px; }
.s3 { margin: 0 5px 0 4px; }
.dec { font-size: 8px; line-height: 8px; text-align: center; font-weight: 700; display: block; padding-top: 2px; }

.bigbtn { display: flex; flex-direction: column; align-items: center; flex: none; text-align: center; line-height: 13px; color: #3b3b3b; }
.bigbtn svg { height: 30px; flex: none; }
.bigbtn svg.sorticon { height: 34px; margin-top: -4px; }
.blabel { margin-top: 5px; white-space: nowrap; }
.w63 { width: 63px; }
.w59 { width: 59px; }
.w42 { width: 42px; }

.gallery { width: 546px; height: 60px; display: flex; border: 1px solid #c6cad0; background: linear-gradient(#fff, #f7f8f9); padding: 4px 0 0 3px; }
.stylegrid { display: grid; grid-template-columns: repeat(5, 100px); grid-auto-rows: 22px; gap: 6px; flex: none; }
.st { font-family: Lato, sans-serif; font-size: 14px; line-height: 20px; padding: 0 4px; white-space: nowrap; overflow: hidden; color: #111; }
.st-normal { background: #fff; outline: 2px solid #f0c868; outline-offset: 1px; line-height: 21px; margin: 0 1px 0 0; }
.st-bad { background: #ffc7ce; color: #9c0006; }
.st-good { background: #c6efce; color: #006100; }
.st-neutral { background: #ffeb9c; color: #9c6500; }
.st-calc { background: #f2f2f2; color: #fa7d00; font-weight: 700; border: 1px solid #7f7f7f; }
.st-check { background: #a5a5a5; color: #fff; font-weight: 700; border: 3px double #3f3f3f; line-height: 16px; padding-left: 2px; }
.st-expl { color: #7f7f7f; font-style: italic; }
.st-input { background: #fc9; color: #3f3f76; border: 1px solid #7f7f7f; }
.st-linked { color: #fa7d00; border-bottom: 3px double #ff8001; }
.st-note { background: #ffc; color: #111; border: 1px solid #b2b2b2; }
.galscroll { width: 14px; margin: -4px 0 0 5px; display: flex; flex-direction: column; border-left: 1px solid #c6cad0; flex: none; }
.galscroll span { flex: 1; display: flex; align-items: center; justify-content: center; border-bottom: 1px solid #c6cad0; background: linear-gradient(#fbfcfd, #e9ebee); }

/* formula bar */
.fbarwrap { height: 30px; padding: 4px 0 5px; background: #e8eaed; }
.fbar { height: 21px; display: flex; background: #fff; border-top: 1px solid #d9dce0; border-bottom: 1px solid #a8adb4; }
.namebox { width: 160px; display: flex; align-items: center; color: #111; font-size: 12px; padding: 1px 7px 0 63px; justify-content: space-between; }
.fxbox { width: 85px; background: #dfe2e7; border-radius: 12px 0 0 12px; display: flex; align-items: center; justify-content: space-between; padding: 0 6px 0 6px; border: 1px solid #b8bcc2; border-width: 0 1px 0 1px; }
.knob { width: 7px; height: 7px; border-radius: 50%; background: #c9ccd1; }
.fx { font: italic bold 14px "Liberation Serif", serif; color: #333; }
.fx sub { font-size: 10px; vertical-align: -1px; }
.finput { flex: 1; }
.fexpand { width: 15px; background: #dfe3e8; display: flex; align-items: center; justify-content: center; border-left: 1px solid #c2c6cc; }

/* sheet */
.sheet { height: 839px; display: flex; overflow: hidden; }
.gridarea { width: 1900px; overflow: hidden; flex: none; }
.gridcols { display: grid; grid-template-columns: 27px 63px 70px 57px 64px 64px 64px 64px 82px 89px 64px 64px 64px 69px 64px 73px 64px 64px 64px 64px 64px 64px 64px 64px 64px 64px 64px 64px 75px 64px; }
.colhead { height: 20px; background: #dfe3e8; border-bottom: 1px solid #9ea3a9; box-shadow: inset 0 1px 0 #a3a8ae; }
.colhead span { border-right: 1px solid #b2b7bd; text-align: center; line-height: 20px; font-size: 12px; color: #3c4650; }
.corner { border-right: 1px solid #9ea3a9; position: relative; }
.corner i { position: absolute; right: 3px; bottom: 3px; border-left: 11px solid transparent; border-bottom: 11px solid #c3c7cc; }
.rows { position: relative; height: 819px; overflow: hidden; background: #fff; }
.lines { position: absolute; inset: 0; }
.lines i { border-right: 1px solid #d6d6d6; }
.row { position: relative; background: linear-gradient(#d6d6d6, #d6d6d6) bottom / 100% 1px no-repeat; font-family: Lato, sans-serif; font-size: 14px; color: #000; }
.row > * { grid-row: 1; min-width: 0; }
.h20 { height: 20px; }
.h25 { height: 25px; }
.h27 { height: 27px; }
.h29 { height: 29px; }
.h31 { height: 31px; }
.h36 { height: 36px; }
.h81 { height: 81px; }
.rh { grid-column: 1; background: #dfe3e8; border-right: 1px solid #9ea3a9; border-bottom: 1px solid #b2b7bd; display: flex; align-items: flex-end; justify-content: center; font: 12px/19px "Noto Sans", sans-serif; color: #3c4650; }
.rhm { padding-bottom: 3px; }
.rhx { padding-bottom: 10px; }
.titlecell { grid-column: 2 / -1; background: #fff; border-bottom: 1px solid #d6d6d6; display: flex; align-items: flex-end; justify-content: center; padding: 0 0 4px 6px; font: bold 66px/1 "Liberation Serif", serif; color: #000; letter-spacing: 3px; -webkit-text-stroke: 3px #000; white-space: nowrap; }

.c { display: flex; align-items: flex-end; justify-content: center; line-height: 20px; white-space: nowrap; }
.left { justify-content: flex-start; padding-left: 3px; }
.lift .c { padding-bottom: 2px; }
.lift .nwd, .lift .reinvest { padding-bottom: 0; }
.mid { padding-bottom: 3px; }
.B { grid-column: 3; } .C { grid-column: 4; } .D { grid-column: 5; } .F { grid-column: 7; } .G { grid-column: 8; }
.I { grid-column: 10; } .J { grid-column: 11; } .O { grid-column: 16; } .P { grid-column: 17; } .Q { grid-column: 18; }
.S { grid-column: 20; } .T { grid-column: 21; } .W { grid-column: 24; } .AB { grid-column: 29; }
.span-BD { grid-column: 3 / 6; } .span-IK { grid-column: 10 / 13; } .span-KM { grid-column: 12 / 15; } .span-OQ { grid-column: 16 / 19; } .span-VX { grid-column: 23 / 26; } .span-AB { grid-column: 29 / 31; }
.head { font-size: 23px; font-weight: 700; align-items: center; padding-top: 2px; color: #050505; -webkit-text-stroke: .3px #000; }
.green { background: #00b050; }
.blue { background: #00b0f0; }
.nwd { background: #ff0; font-size: 23px; font-weight: 700; align-items: center; padding-bottom: 3px; -webkit-text-stroke: .3px #000; }
.lift .nwd { padding-bottom: 2px; }
.reinv { justify-content: flex-start; padding-left: 14px; overflow: hidden; }
.sub { font-size: 19.500px; font-weight: 700; text-decoration: underline; line-height: 26px; -webkit-text-stroke: .2px #000; }
.ital { font-style: italic; }
.row .left.sub { padding-left: 3px; }
.bdate { font-weight: 700; font-size: 13.500px; line-height: 22px; justify-content: flex-start; padding-left: 3px; }
.val { font-size: 17px; font-weight: 700; padding-bottom: 1px; -webkit-text-stroke: .2px #000; }
.total { font-size: 23px; font-weight: 700; justify-content: flex-end; align-items: center; padding: 0 8px 3px 0; -webkit-text-stroke: .3px #000; }
.total.big { font-size: 25px; }
.sum { background: #e36c0a; font-size: 24px; font-weight: 700; font-style: italic; align-items: center; padding-bottom: 2px; -webkit-text-stroke: .3px #000; }
.reinvest { background: #00b050; font-size: 18.500px; font-weight: 700; align-items: center; -webkit-text-stroke: .2px #000; }

.vscroll { width: 20px; background: #e8eaed; display: flex; flex-direction: column; align-items: center; border-left: 1px solid #b8bcc2; border-top: 1px solid #9ea3a9; }
.split { width: 15px; height: 7px; background: #fff; border: 1px solid #9ea3a9; margin-top: 1px; display: flex; align-items: center; justify-content: center; }
.split i { width: 9px; height: 1px; background: #8b9096; }
.arrow { height: 16px; display: flex; align-items: center; justify-content: center; width: 100%; }
.thumb { flex: none; height: 770px; width: 16px; margin-top: 3px; margin-bottom: 26px; background: linear-gradient(90deg, #f4f6f9, #dde2e8); border: 1px solid #a9afb7; border-radius: 2px; display: flex; align-items: center; justify-content: center; }
.thumb i { width: 7px; height: 5px; border-top: 1px solid #7a8088; border-bottom: 1px solid #7a8088; }

/* tab bar */
.tabbar { height: 16px; display: flex; background: #dfe3e8; border-top: 1px solid #9ea3a9; border-bottom: 1px solid #9ea3a9; }
.nav { width: 62px; display: flex; align-items: center; padding-left: 5px; }
.sheets { width: 1079px; display: flex; align-items: stretch; font-size: 12px; color: #50565e; }
.stab { width: 60px; text-align: center; line-height: 14px; flex: none; position: relative; }
.stab::after { content: ""; position: absolute; right: 0; top: 0; bottom: 0; width: 10px; background: linear-gradient(to bottom right, transparent 46%, #9ea3a9 48%, #9ea3a9 54%, transparent 56%); }
.stab.first { border-left: 1px solid #b8bcc2; }
.stab.active { background: #fff; color: #222; font-weight: 700; width: 62px; clip-path: polygon(0 0, 100% 0, calc(100% - 9px) 100%, 3px 100%); }
.newtab { width: 40px; display: flex; align-items: center; justify-content: center; }
.hscroll { flex: 1; display: flex; align-items: center; padding-right: 20px; }
.hsplit { width: 7px; height: 13px; background: #fff; border: 1px solid #9ea3a9; flex: none; }
.harrow { width: 17px; display: flex; justify-content: center; flex: none; }
.tl { border-top: 4px solid transparent; border-bottom: 4px solid transparent; border-right: 5px solid #555; }
.tr { border-top: 4px solid transparent; border-bottom: 4px solid transparent; border-left: 5px solid #555; }
.hthumb { flex: none; width: 661px; height: 14px; background: linear-gradient(#f2f4f7, #dde1e6); border-left: 1px solid #a9afb7; border-right: 1px solid #a9afb7; display: flex; align-items: center; justify-content: center; }
.hthumb i { width: 7px; height: 7px; border-left: 1px solid #7a8088; border-right: 1px solid #7a8088; }
.htrack { flex: 1; }

/* status */
.status { height: 22px; display: flex; align-items: center; background: linear-gradient(#eceef1, #d8dade 50%, #bfc2c7); font-size: 11.500px; color: #444; }
.ready { width: 49px; padding-left: 8px; border-right: 1px solid #a6a9ae; line-height: 20px; flex: none; }
.stright { margin-left: auto; display: flex; align-items: center; padding-left: 5px; border-left: 1px solid #a6a9ae; height: 22px; width: 242px; }
.view { width: 18px; height: 19px; display: flex; align-items: center; justify-content: center; margin-right: 1px; flex: none; }
.view.on { background: linear-gradient(#fdeaa8, #fbd46e); border: 1px solid #d8a93c; border-radius: 2px; }
.zoomlabel { margin-left: 8px; width: 37px; flex: none; }
.zbtn { width: 15px; height: 15px; border-radius: 50%; background: linear-gradient(#fafbfc, #c9ccd1); border: 1px solid #8d9197; font: bold 14px/12px "Liberation Sans", sans-serif; text-align: center; color: #333; flex: none; }
.slider { flex: none; width: 100px; height: 1px; background: #8d9197; position: relative; }
.slider i { position: absolute; left: 46%; top: -7px; width: 8px; height: 13px; background: #f2f4f7; border: 1px solid #777; border-radius: 1px 1px 4px 4px; }

/* taskbar */
.taskbar { height: 40px; display: flex; justify-content: space-between; background: linear-gradient(90deg, #7f93ab, #a6bfda 160px, #a6bfda 1730px, #7c90a8 1775px); border-top: 1px solid #3f4a56; }
.tb-left { display: flex; align-items: center; height: 100%; }
.tk { display: flex; align-items: center; justify-content: center; flex: none; }
.t-orb { width: 54px; }
.t-vlc { width: 68px; }
.t-ie { width: 60px; margin-right: 1px; }
.box { height: 38px; display: flex; align-items: center; justify-content: center; flex: none; border: 1px solid #4a5868; border-radius: 3px; background: linear-gradient(#d3deea, #a8bfd8 60%, #b8cbe0); box-shadow: inset 0 0 0 1px rgba(255,255,255,.45); }
.b-58 { width: 59px; }
.b-59 { width: 59px; }
.b-55 { width: 55px; margin-left: 3px; }
.ml4 { margin-left: 3px; }
.ml { margin-left: 1px; }
.t-wmp { width: 64px; }
.gapline { width: 4px; height: 38px; margin: 0 3px 0 0; border-right: 1px solid #4a5868; flex: none; }
.xlicon { margin-left: -3px; }
.skype { font: bold 23px "Liberation Sans", sans-serif; fill: #fff; text-anchor: middle; }
.xlbig { font: bold 23px "Liberation Sans", sans-serif; fill: #1a8a3a; text-anchor: middle; }
.az { font: bold 15px "Liberation Serif", serif; text-anchor: middle; }
.azA { fill: #2f5fa8; }
.azZ { fill: #8a2a2a; }
.help { font: bold 13px "Liberation Sans", sans-serif; fill: #fff; text-anchor: middle; }
.tray { display: flex; align-items: center; width: 155px; flex: none; }
.tr-up { margin-right: 13px; flex: none; }
.flag { margin-right: 5px; flex: none; }
.clock { width: 74px; margin-left: 5px; color: #fff; display: flex; flex-direction: column; align-items: center; font-size: 13px; line-height: 17px; flex: none; }
.showdesk { width: 14px; height: 39px; background: linear-gradient(90deg, #8296ad, #5f7186); border-left: 1px solid #3f4a56; flex: none; }
```
